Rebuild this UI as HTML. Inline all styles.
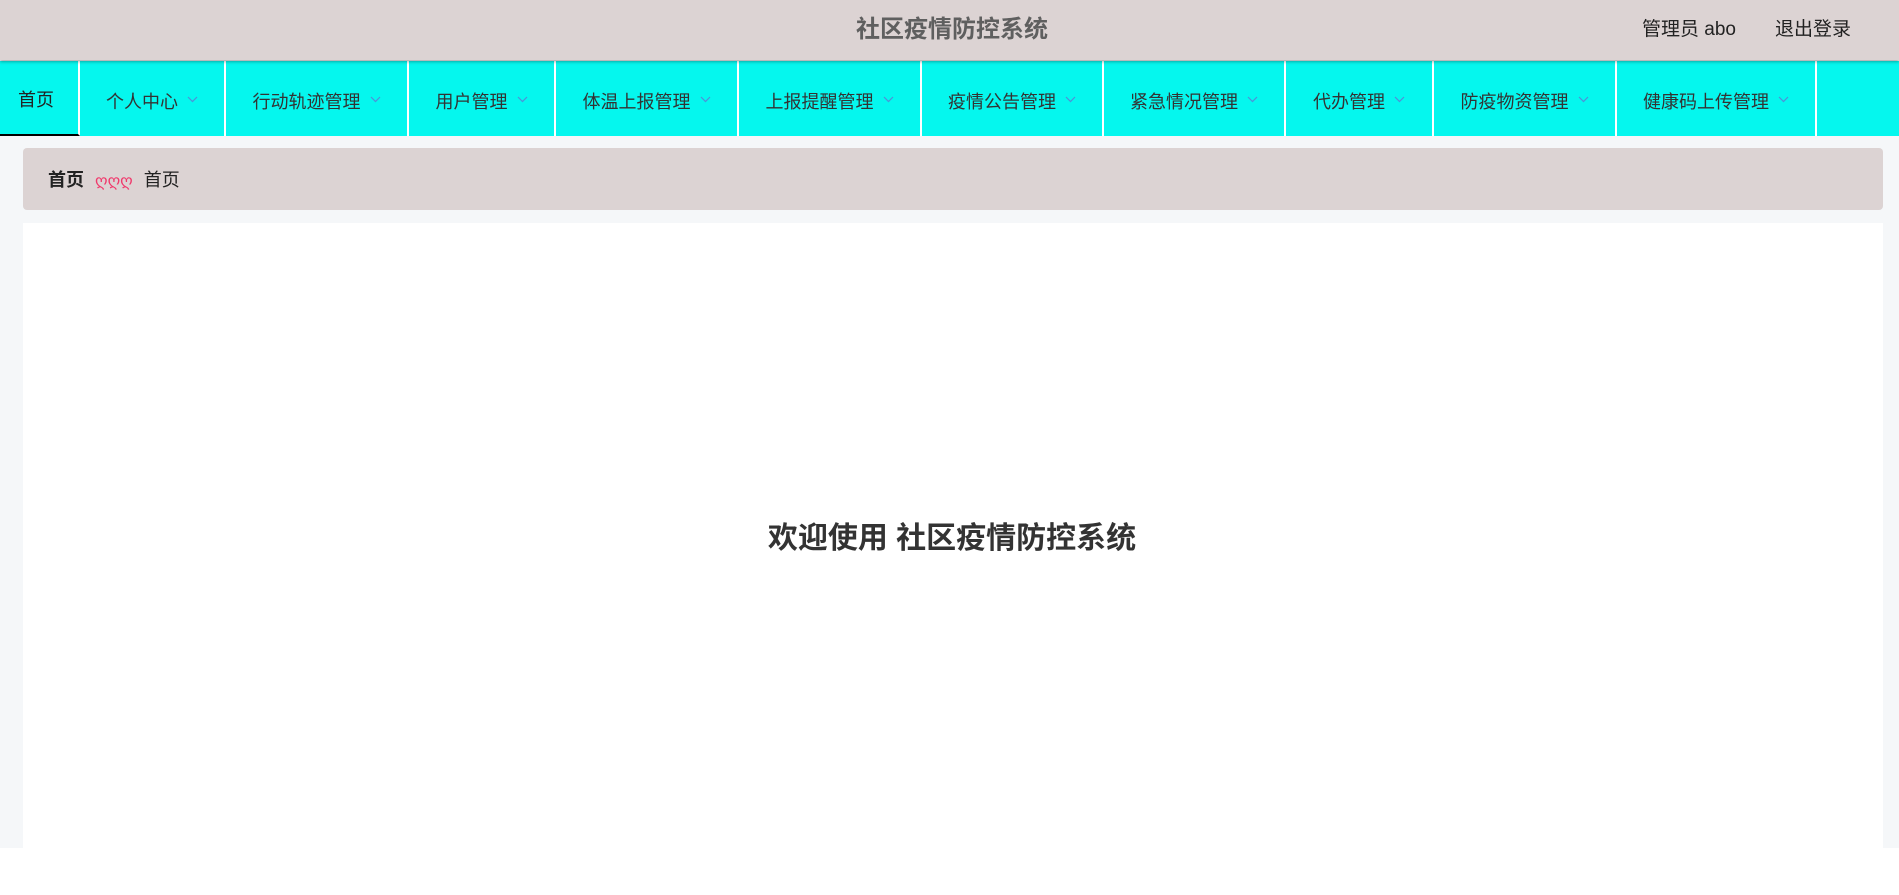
<!DOCTYPE html>
<html><head><meta charset="utf-8"><style>
*{margin:0;padding:0;box-sizing:border-box}
body{width:1899px;height:895px;background:#fff;font-family:"Liberation Sans","Noto Sans CJK SC",sans-serif;position:relative;overflow:hidden}
.bg{position:absolute;left:0;top:0;width:1899px;height:848px;background:#f5f7f9}
.hd{position:absolute;left:0;top:0;width:1899px;height:60px;background:#dcd3d3;box-shadow:0 2px 3px rgba(0,0,0,.3);z-index:2}
.title{position:absolute;left:0;width:1899px;top:0;line-height:60px;text-align:center;font-size:24px;font-weight:bold;color:#5f5f5f;padding-left:5px}
.ur{position:absolute;top:0;line-height:60px;font-size:19px;color:#222}
.nav{position:absolute;left:0;top:61px;width:1899px;height:75px;background:#05f7ee;display:flex}
.it{height:75px;border-right:2px solid #fff;font-size:18px;color:#333;line-height:83px;text-align:center;position:relative}
.it svg{margin-left:9px;vertical-align:5px}
.it.on{border-bottom:2px solid #000;color:#222;text-align:left;padding-left:18px;line-height:78px}
.bc{position:absolute;left:23px;top:148px;width:1860px;height:62px;background:#dcd3d3;border-radius:4px;font-size:18px;line-height:64px;padding-left:25px;color:#222}
.ct{position:absolute;left:23px;top:223px;width:1860px;height:625px;background:#fff}
.wel{position:absolute;left:0;width:1899px;top:513px;text-align:center;font-size:30px;font-weight:bold;color:#333;padding-left:5px}
</style></head><body>
<div class="bg"></div>
<div class="hd"><div class="title">社区疫情防控系统</div>
<div class="ur" style="left:1642px">管理员 abo</div>
<div class="ur" style="left:1775px">退出登录</div></div>
<div class="nav">
<div class="it on" style="width:80px">首页</div>
<div class="it" style="width:146px">个人中心<svg width="11" height="7" viewBox="0 0 11 7"><path d="M1 1l4.5 4.5L10 1" fill="none" stroke="#4f8fd8" stroke-width="1.2"/></svg></div>
<div class="it" style="width:183px">行动轨迹管理<svg width="11" height="7" viewBox="0 0 11 7"><path d="M1 1l4.5 4.5L10 1" fill="none" stroke="#4f8fd8" stroke-width="1.2"/></svg></div>
<div class="it" style="width:147px">用户管理<svg width="11" height="7" viewBox="0 0 11 7"><path d="M1 1l4.5 4.5L10 1" fill="none" stroke="#4f8fd8" stroke-width="1.2"/></svg></div>
<div class="it" style="width:183px">体温上报管理<svg width="11" height="7" viewBox="0 0 11 7"><path d="M1 1l4.5 4.5L10 1" fill="none" stroke="#4f8fd8" stroke-width="1.2"/></svg></div>
<div class="it" style="width:183px">上报提醒管理<svg width="11" height="7" viewBox="0 0 11 7"><path d="M1 1l4.5 4.5L10 1" fill="none" stroke="#4f8fd8" stroke-width="1.2"/></svg></div>
<div class="it" style="width:182px">疫情公告管理<svg width="11" height="7" viewBox="0 0 11 7"><path d="M1 1l4.5 4.5L10 1" fill="none" stroke="#4f8fd8" stroke-width="1.2"/></svg></div>
<div class="it" style="width:182px">紧急情况管理<svg width="11" height="7" viewBox="0 0 11 7"><path d="M1 1l4.5 4.5L10 1" fill="none" stroke="#4f8fd8" stroke-width="1.2"/></svg></div>
<div class="it" style="width:148px">代办管理<svg width="11" height="7" viewBox="0 0 11 7"><path d="M1 1l4.5 4.5L10 1" fill="none" stroke="#4f8fd8" stroke-width="1.2"/></svg></div>
<div class="it" style="width:183px">防疫物资管理<svg width="11" height="7" viewBox="0 0 11 7"><path d="M1 1l4.5 4.5L10 1" fill="none" stroke="#4f8fd8" stroke-width="1.2"/></svg></div>
<div class="it" style="width:200px">健康码上传管理<svg width="11" height="7" viewBox="0 0 11 7"><path d="M1 1l4.5 4.5L10 1" fill="none" stroke="#4f8fd8" stroke-width="1.2"/></svg></div>
</div>
<div class="bc"><b>首页</b> <span style="color:#f0386b;font-size:16px;margin:0 6px">ღღღ</span> 首页</div>
<div class="ct"></div>
<div class="wel">欢迎使用 社区疫情防控系统</div>
</body></html>
